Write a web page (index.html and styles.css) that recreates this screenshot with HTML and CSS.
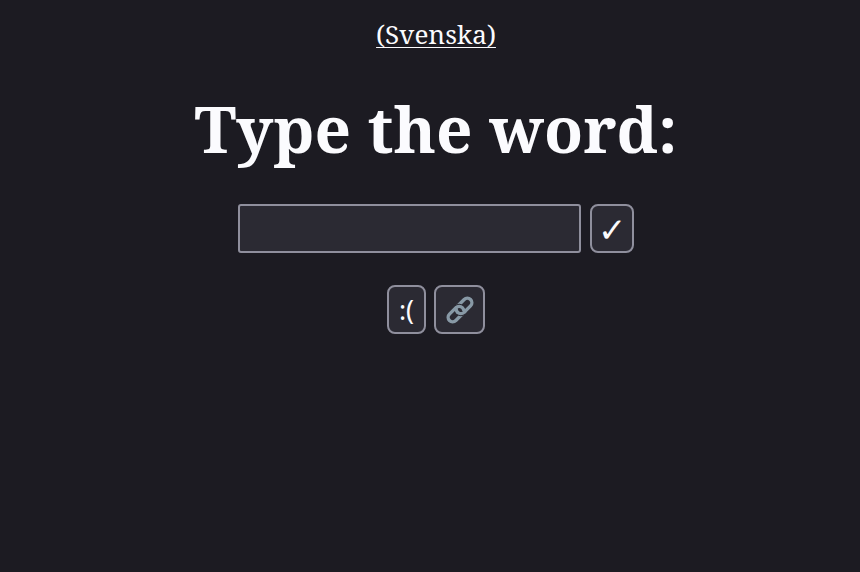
FILE: index.html
```html
<!DOCTYPE html>
<html lang="en">
<head>
<meta charset="utf-8">
<title>Type the word</title>
<link rel="stylesheet" href="styles.css">
</head>
<body>
<a class="language" href="#">(Svenska)</a>
<h1 class="title">Type the word:</h1>
<form class="entry">
<input class="word" type="text" aria-label="Word">
<button class="button check" type="button">✓</button>
</form>
<div class="actions">
<button class="button sad" type="button">:(</button>
<button class="button share" type="button" aria-label="Link">
<svg class="link-icon" viewBox="0 0 28 28" fill="none" stroke="#8899a6" stroke-width="3.4">
<g transform="rotate(-45 14 14)">
<rect x="10.7" y="9.5" width="18.2" height="9" rx="4.5"/>
<path d="M13.5 9.5H14Q17.3 10.4 17.3 13" stroke="#2b2a33" stroke-width="4.4"/>
<rect x="-.9" y="9.5" width="18.2" height="9" rx="4.5"/>
<path d="M10.7 15Q11.2 18.5 15.2 18.5" stroke="#2b2a33" stroke-width="4.4"/>
<path d="M10.7 13.5V14A4.5 4.5 0 0 0 15.2 18.5H17"/>
</g>
</svg>
</button>
</div>
</body>
</html>
```
FILE: styles.css
```css
body {
  margin: 0;
  padding: 16px 0 0 12px;
  background: #1c1b22;
  color: #fbfbfe;
  font-family: "Noto Serif", "DejaVu Serif", serif;
  display: flex;
  flex-direction: column;
  align-items: center;
}
.language {
  color: inherit;
  font-size: 26.1px;
  line-height: 36px;
  text-decoration-thickness: 1px;
  text-underline-offset: 3px;
}
.title {
  margin: 33px 0 0;
  font-size: 63.9px;
  line-height: 87px;
  white-space: nowrap;
}
.entry {
  display: flex;
  gap: 9px;
  margin: 32px 0 0;
}
.word, .button {
  box-sizing: border-box;
  height: 49px;
  border: 2px solid #8f8f9d;
  background: #2b2a33;
  color: #fbfbfe;
  font: 26.67px "Noto Sans", sans-serif;
  padding: 0;
}
.word {
  width: 343px;
  border-radius: 3px;
}
.button {
  border-radius: 8px;
  display: flex;
  align-items: center;
  justify-content: center;
}
.check {
  width: 44px;
  font-size: 34px;
  padding-top: 1px;
}
.actions {
  display: flex;
  gap: 8px;
  margin-top: 32px;
}
.sad { width: 39px; }
.share { width: 51px; }
.link-icon { width: 28px; height: 28px; }
```
